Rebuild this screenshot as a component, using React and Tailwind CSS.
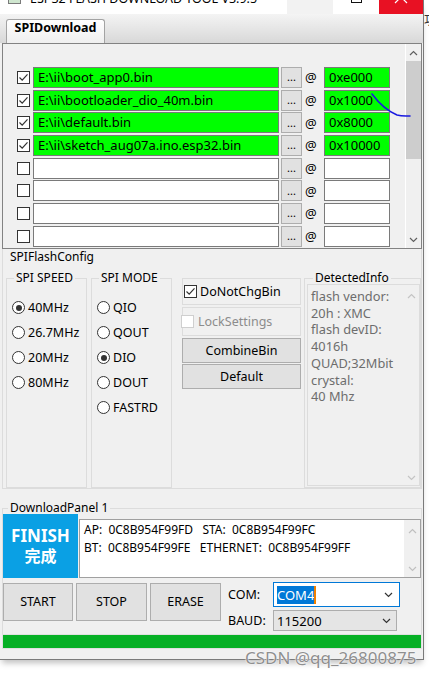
import React from "react";

const FILES = [
  { path: "E:\\ii\\boot_app0.bin", addr: "0xe000", checked: true },
  { path: "E:\\ii\\bootloader_dio_40m.bin", addr: "0x1000", checked: true },
  { path: "E:\\ii\\default.bin", addr: "0x8000", checked: true },
  { path: "E:\\ii\\sketch_aug07a.ino.esp32.bin", addr: "0x10000", checked: true },
  {},
  {},
  {},
  {},
];

const DETECTED = ["flash vendor:", "20h : XMC", "flash devID:", "4016h", "QUAD;32Mbit", "crystal:", "40 Mhz"];

function Chevron({ up, className }) {
  return (
    <svg width="9" height="6" viewBox="0 0 9 6" className={className}>
      <path d={up ? "M1 5 L4.5 1.5 L8 5" : "M1 1 L4.5 4.5 L8 1"} fill="none" stroke="currentColor" strokeWidth="1.2" />
    </svg>
  );
}

function CheckBox({ checked, disabled }) {
  return (
    <div
      className={`flex h-[13px] w-[13px] shrink-0 items-center justify-center border bg-white ${
        disabled ? "border-[#cfcfcf]" : "border-[#333333]"
      }`}
    >
      {checked && (
        <svg width="11" height="11" viewBox="0 0 11 11">
          <path d="M1.5 5.5 L4.2 8.2 L9.5 2.3" fill="none" stroke="#333" strokeWidth="1.2" />
        </svg>
      )}
    </div>
  );
}

function Radio({ label, checked }) {
  return (
    <div className="flex h-[25px] items-center">
      <div className="flex h-[13px] w-[13px] shrink-0 items-center justify-center rounded-full border border-[#333333] bg-white">
        {checked && <div className="h-[6px] w-[6px] rounded-full bg-[#333333]" />}
      </div>
      <span className="ml-[3px] text-[12.5px] leading-[16px]">{label}</span>
    </div>
  );
}

function FileRow({ path, addr, checked }) {
  const filled = !!path;
  return (
    <div className="flex h-[22.7px] items-center">
      <div className="ml-[14px]">
        <CheckBox checked={checked} />
      </div>
      <div
        className={`ml-[3px] h-[21px] w-[246px] truncate border border-[#7a7a7a] pl-[4px] text-[13px] leading-[19px] ${
          filled ? "bg-[#00ff00]" : "bg-white"
        }`}
      >
        {path}
      </div>
      <div className="ml-[2px] flex h-[21px] w-[21px] items-center justify-center border border-[#adadad] bg-[#e1e1e1] text-[11px] leading-[14px]">
        ...
      </div>
      <span className="ml-[3px] w-[14px] text-[13px] leading-[16px]">@</span>
      <div
        className={`ml-[5px] h-[21px] w-[66px] border border-[#7a7a7a] pl-[4px] text-[13px] leading-[19px] ${
          filled ? "bg-[#00ff00]" : "bg-white"
        }`}
      >
        {addr}
      </div>
    </div>
  );
}

function Button({ children, className }) {
  return (
    <div
      className={`flex items-center justify-center border border-[#adadad] bg-[#e1e1e1] text-[12.5px] leading-[16px] ${className}`}
    >
      {children}
    </div>
  );
}

export default function App() {
  return (
    <div className="relative flex h-[677px] w-[429px] overflow-hidden bg-white font-['Noto_Sans','Noto_Sans_CJK_SC',sans-serif] text-black">
      <div className="flex h-[660px] w-[424px] shrink-0 flex-col border-r border-b border-[#7a7a7a] bg-[#f0f0f0] shadow-[0_5px_6px_-2px_rgba(0,0,0,0.25)]">
        {/* title bar */}
        <div className="flex h-[14px] overflow-hidden bg-white">
          <div className="ml-[8px] -mt-[9px] h-[13px] w-[13px] border border-[#7a7a7a] bg-[#cfe6cf]" />
          <span className="ml-[9px] -mt-[8px] whitespace-nowrap text-[12.5px] leading-[14px]">
            ESP32 FLASH DOWNLOAD TOOL V3.9.5
          </span>
          <div className="ml-auto flex">
            <div className="w-[46px] bg-[#f2f2f2]" />
            <div className="flex w-[46px] justify-center">
              <div className="-mt-[8px] h-[11px] w-[11px] border border-[#111]" />
            </div>
            <div className="flex w-[44px] justify-center bg-[#e81123]">
              <svg width="16" height="14" viewBox="0 0 16 14" className="-mt-[10px]">
                <path d="M2 1 L14 13 M14 1 L2 13" stroke="#fff" strokeWidth="1.2" />
              </svg>
            </div>
          </div>
        </div>

        {/* tab strip */}
        <div className="flex h-[29px] items-end bg-linear-to-b from-[#f4f4f4] to-[#d8d8d8] pl-[6px]">
          <div className="flex h-[24px] w-[99px] justify-center rounded-t-[3px] border border-b-0 border-[#a3a3a3] bg-linear-to-b from-white to-[#efefef] text-[12.5px] font-bold leading-[16px]">
            SPIDownload
          </div>
        </div>

        {/* panel */}
        <div className="flex flex-col pl-[2px] pr-[1px]">
          {/* file list */}
          <div className="flex h-[206px] border border-[#828282] bg-[#f0f0f0]">
            <div className="flex-1 pt-[22px]">
              {FILES.map((f, i) => (
                <FileRow key={i} {...f} />
              ))}
            </div>
            <div className="flex w-[16px] flex-col border-l border-white text-[#606060]">
              <div className="flex h-[17px] items-center justify-center">
                <Chevron up />
              </div>
              <div className="h-[98px] bg-[#cdcdcd]" />
              <div className="flex-1" />
              <div className="flex h-[16px] items-center justify-center">
                <Chevron />
              </div>
            </div>
          </div>

          {/* SPIFlashConfig */}
          <div className="h-[240px] border-x border-b border-[#dcdcdc]">
            <div className="h-[22px] pl-[7px] text-[12px] leading-[16px]">SPIFlashConfig</div>
            <div className="flex h-[217px] pl-[3px]">
              <fieldset className="h-full w-[81px] border border-[#dcdcdc]">
                <legend className="ml-[7px] px-[2px] text-[12px] leading-[14px]">SPI SPEED</legend>
                <div className="pl-[5px] pt-[10px]">
                  <Radio label="40MHz" checked />
                  <Radio label="26.7MHz" />
                  <Radio label="20MHz" />
                  <Radio label="80MHz" />
                </div>
              </fieldset>
              <fieldset className="ml-[4px] h-full w-[81px] border border-[#dcdcdc]">
                <legend className="ml-[7px] px-[2px] text-[12px] leading-[14px]">SPI MODE</legend>
                <div className="pl-[5px] pt-[10px]">
                  <Radio label="QIO" />
                  <Radio label="QOUT" />
                  <Radio label="DIO" checked />
                  <Radio label="DOUT" />
                  <Radio label="FASTRD" />
                </div>
              </fieldset>
              <div className="flex w-[132px] flex-col pl-[10px] pt-[7px]">
                <div className="flex h-[27px] w-[119px] items-center border border-[#dcdcdc] pl-[1px]">
                  <CheckBox checked />
                  <span className="ml-[3px] text-[12.5px] leading-[16px]">DoNotChgBin</span>
                </div>
                <div className="mt-[2px] flex h-[29px] w-[119px] items-center border border-[#dcdcdc]">
                  <div className="-ml-[2px]">
                    <CheckBox disabled />
                  </div>
                  <span className="ml-[4px] text-[12.5px] leading-[16px] text-[#8c8c8c]">LockSettings</span>
                </div>
                <Button className="mt-[2px] h-[25px] w-[119px]">CombineBin</Button>
                <Button className="mt-[1px] h-[25px] w-[119px]">Default</Button>
              </div>
              <fieldset className="h-full w-[117px] border border-[#dcdcdc] pl-[2px]">
                <legend className="ml-[6px] px-[2px] text-[12px] leading-[14px]">DetectedInfo</legend>
                <div className="-mt-[1px] flex h-[202px] border border-[#dcdcdc]">
                  <div className="flex-1 pl-[3px] pt-[3px] text-[12.8px] leading-[16.7px] text-[#6d6d6d]">
                    {DETECTED.map((t) => (
                      <div key={t}>{t}</div>
                    ))}
                  </div>
                  <div className="flex w-[15px] flex-col items-center justify-between pb-[4px] pt-[8px] text-[#c4c4c4]">
                    <Chevron up />
                    <Chevron />
                  </div>
                </div>
              </fieldset>
            </div>
          </div>

          {/* DownloadPanel */}
          <fieldset className="mt-[12px] border border-b-0 border-[#dcdcdc]">
            <legend className="ml-[5px] px-[2px] text-[12px] leading-[14px]">DownloadPanel 1</legend>
            <div className="-mt-[1px] flex items-start">
              <div className="flex h-[64px] w-[75px] flex-col items-center justify-center bg-[#0aa0e4] font-bold text-white">
                <span className="text-[17px] leading-[18px]">FINISH</span>
                <span className="mt-[1px] text-[16px] leading-[20px]">完成</span>
              </div>
              <div className="ml-[1px] mt-[5px] flex h-[59px] w-[342px] border border-[#a0a0a0] bg-white">
                <div className="flex-1 whitespace-pre pl-[4px] pt-[1px] text-[12px] leading-[18px]">
                  <div>AP:  0C8B954F99FD   STA:  0C8B954F99FC</div>
                  <div>BT:  0C8B954F99FE   ETHERNET:  0C8B954F99FF</div>
                </div>
                <div className="flex w-[16px] flex-col items-center justify-between bg-[#f0f0f0] pb-[5px] pt-[8px] text-[#c0c0c0]">
                  <Chevron up />
                  <Chevron />
                </div>
              </div>
            </div>

            <div className="mt-[4px] flex items-start">
              <Button className="mt-[1px] h-[38px] w-[70px]">START</Button>
              <Button className="ml-[3px] mt-[1px] h-[38px] w-[71px]">STOP</Button>
              <Button className="ml-[3px] mt-[1px] h-[38px] w-[71px]">ERASE</Button>
              <div className="ml-[7px] flex flex-col">
                <div className="flex h-[25px] items-center">
                  <span className="w-[45px] text-[12.5px] leading-[16px]">COM:</span>
                  <div className="flex h-[25px] w-[127px] items-center border border-[#0078d7] bg-white pl-[3px] pr-[6px]">
                    <span className="bg-[#0078d7] text-[13px] leading-[18px] text-white">COM4</span>
                    <span className="h-[18px] w-[1.5px] bg-[#f08000]" />
                    <Chevron className="ml-auto text-[#333]" />
                  </div>
                </div>
                <div className="mt-[3px] flex h-[21px] items-center">
                  <span className="w-[45px] text-[12.5px] leading-[16px]">BAUD:</span>
                  <div className="flex h-[21px] w-[124px] items-center border border-[#adadad] bg-[#e5e5e5] pl-[3px] pr-[5px]">
                    <span className="text-[13px] leading-[18px]">115200</span>
                    <Chevron className="ml-auto text-[#333]" />
                  </div>
                </div>
              </div>
            </div>

            <div className="-mx-[1px] mt-[3px] h-[15px] border border-[#e0e0e0] bg-[#06b025]" />
          </fieldset>
        </div>
      </div>

      <div className="w-[5px] overflow-hidden">
        <span className="mt-[12px] block text-[13px] leading-[14px] text-[#333]">功</span>
      </div>

      {/* pen mark */}
      <svg width="429" height="677" className="pointer-events-none absolute left-0 top-0">
        <path d="M372 94 C378 102 385 110 397 115 C402 116.5 406 116 410 116" fill="none" stroke="#1a1ae0" strokeWidth="1.6" strokeLinecap="round" />
      </svg>

      {/* watermark */}
      <span className="absolute left-[245px] top-[649px] whitespace-nowrap text-[17px] leading-[18px] text-[#8f8f8f] [text-shadow:0_0_1px_#fff,0_0_2px_#fff]">
        CSDN @qq_26800875
      </span>
    </div>
  );
}
